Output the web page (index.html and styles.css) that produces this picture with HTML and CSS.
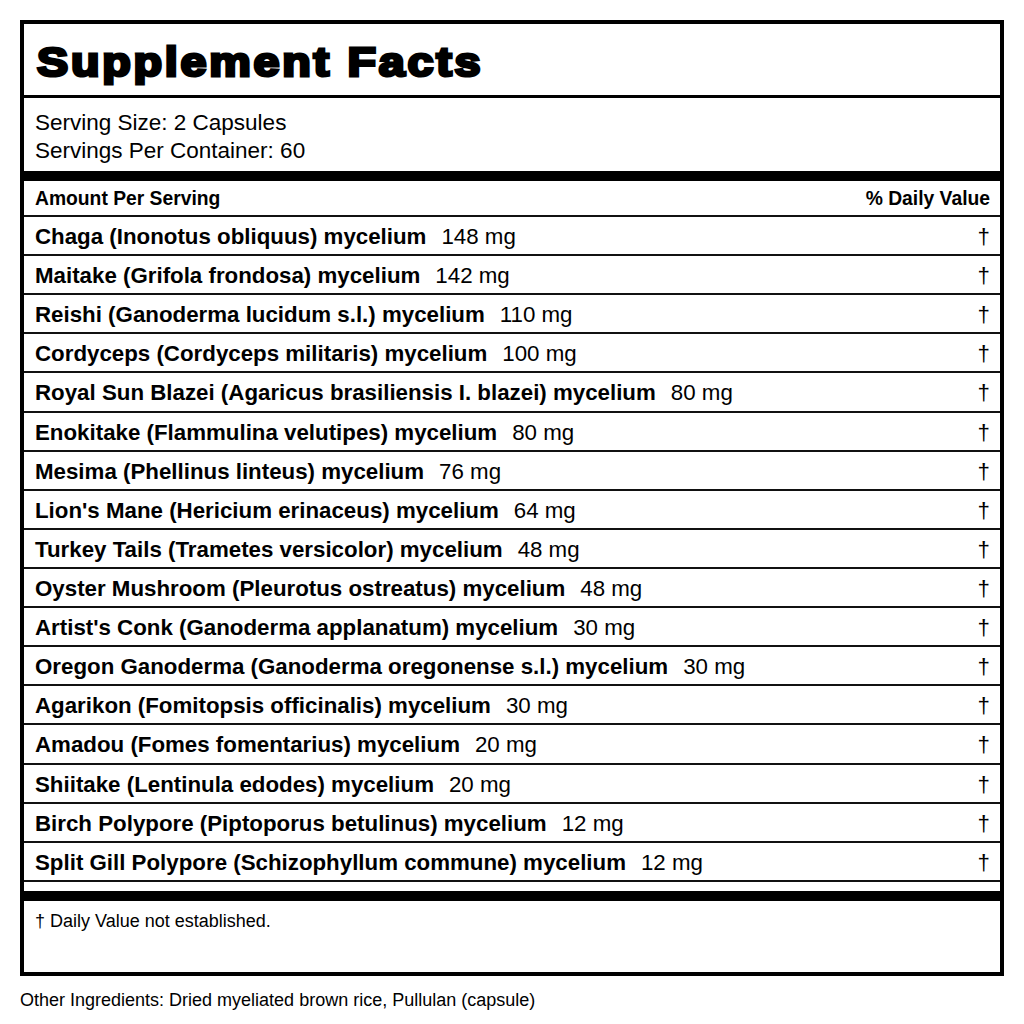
FILE: index.html
```html
<!DOCTYPE html>
<html>
<head>
<meta charset="utf-8">
<link rel="stylesheet" href="styles.css">
</head>
<body>
<div class="label">
  <div class="title"><span class="title-text">Supplement Facts</span></div>
  <div class="serving">
    <div>Serving Size: 2 Capsules</div>
    <div>Servings Per Container: 60</div>
  </div>
  <div class="thick"></div>
  <div class="row head"><span>Amount Per Serving</span><span class="dv">% Daily Value</span></div>
  <div class="row"><span class="name">Chaga (Inonotus obliquus) mycelium</span><span class="amt">148 mg</span><span class="dag">†</span></div>
  <div class="row"><span class="name">Maitake (Grifola frondosa) mycelium</span><span class="amt">142 mg</span><span class="dag">†</span></div>
  <div class="row"><span class="name">Reishi (Ganoderma lucidum s.l.) mycelium</span><span class="amt">110 mg</span><span class="dag">†</span></div>
  <div class="row"><span class="name">Cordyceps (Cordyceps militaris) mycelium</span><span class="amt">100 mg</span><span class="dag">†</span></div>
  <div class="row"><span class="name">Royal Sun Blazei (Agaricus brasiliensis I. blazei) mycelium</span><span class="amt">80 mg</span><span class="dag">†</span></div>
  <div class="row"><span class="name">Enokitake (Flammulina velutipes) mycelium</span><span class="amt">80 mg</span><span class="dag">†</span></div>
  <div class="row"><span class="name">Mesima (Phellinus linteus) mycelium</span><span class="amt">76 mg</span><span class="dag">†</span></div>
  <div class="row"><span class="name">Lion's Mane (Hericium erinaceus) mycelium</span><span class="amt">64 mg</span><span class="dag">†</span></div>
  <div class="row"><span class="name">Turkey Tails (Trametes versicolor) mycelium</span><span class="amt">48 mg</span><span class="dag">†</span></div>
  <div class="row"><span class="name">Oyster Mushroom (Pleurotus ostreatus) mycelium</span><span class="amt">48 mg</span><span class="dag">†</span></div>
  <div class="row"><span class="name">Artist's Conk (Ganoderma applanatum) mycelium</span><span class="amt">30 mg</span><span class="dag">†</span></div>
  <div class="row"><span class="name">Oregon Ganoderma (Ganoderma oregonense s.l.) mycelium</span><span class="amt">30 mg</span><span class="dag">†</span></div>
  <div class="row"><span class="name">Agarikon (Fomitopsis officinalis) mycelium</span><span class="amt">30 mg</span><span class="dag">†</span></div>
  <div class="row"><span class="name">Amadou (Fomes fomentarius) mycelium</span><span class="amt">20 mg</span><span class="dag">†</span></div>
  <div class="row"><span class="name">Shiitake (Lentinula edodes) mycelium</span><span class="amt">20 mg</span><span class="dag">†</span></div>
  <div class="row"><span class="name">Birch Polypore (Piptoporus betulinus) mycelium</span><span class="amt">12 mg</span><span class="dag">†</span></div>
  <div class="row"><span class="name">Split Gill Polypore (Schizophyllum commune) mycelium</span><span class="amt">12 mg</span><span class="dag">†</span></div>
  <div class="spacer"></div>
  <div class="thick"></div>
  <div class="foot">† Daily Value not established.</div>
</div>
<div class="other">Other Ingredients: Dried myeliated brown rice, Pullulan (capsule)</div>
</body>
</html>
```

FILE: styles.css
```css
html, body {
  margin: 0;
  padding: 0;
  background: #fff;
}
body {
  font-family: "Liberation Sans", Arial, sans-serif;
  color: #000;
  padding: 20px 0 0 20px;
}
.label {
  width: 976px;
  height: 948px;
  border: 4px solid #000;
  display: flex;
  flex-direction: column;
}
.title {
  height: 74px;
  box-sizing: border-box;
  padding: 17px 0 0 13px;
  border-bottom: 3px solid #000;
  flex: none;
}
.title-text {
  display: inline-block;
  font-size: 41px;
  line-height: 42px;
  font-weight: bold;
  letter-spacing: 2.4px;
  -webkit-text-stroke: 3px #000;
  transform: scaleX(1.14);
  transform-origin: left center;
}
.serving {
  height: 73px;
  box-sizing: border-box;
  padding: 11px 11px 0;
  font-size: 22.5px;
  line-height: 28px;
  flex: none;
}
.thick {
  height: 10px;
  background: #000;
  flex: none;
}
.row {
  display: flex;
  align-items: center;
  height: 39.12px;
  box-sizing: border-box;
  border-bottom: 2px solid #111;
  padding: 3px 10px 0 11px;
  font-size: 22.3px;
  flex: none;
}
.row.head {
  height: 36px;
  font-size: 19.3px;
  font-weight: bold;
  justify-content: space-between;
  padding: 2px 10px 0 11px;
}
.name {
  font-weight: bold;
}
.amt {
  margin-left: 15px;
}
.dag {
  margin-left: auto;
}
.spacer {
  height: 9px;
  flex: none;
}
.foot {
  padding: 8px 11px 0 11px;
  font-size: 18px;
  line-height: 24px;
}
.other {
  margin-top: 13px;
  font-size: 18px;
  line-height: 22px;
}
```
